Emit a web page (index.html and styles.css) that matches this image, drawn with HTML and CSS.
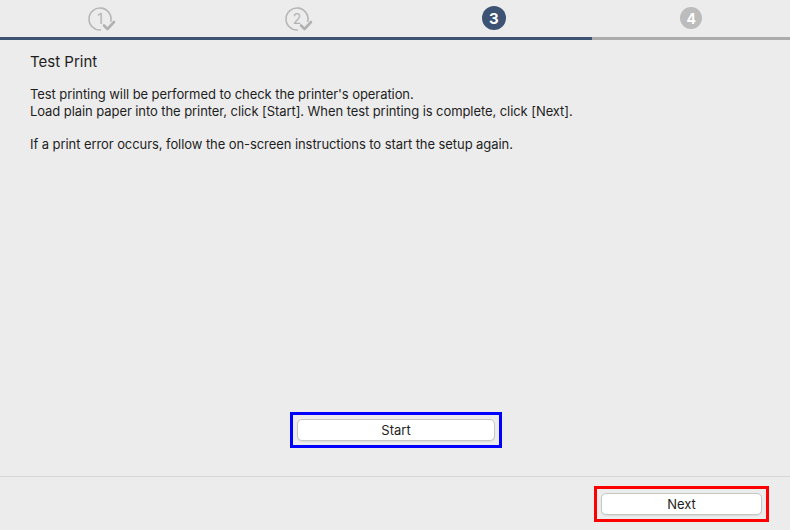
FILE: index.html
```html
<!DOCTYPE html>
<html>
<head>
<meta charset="utf-8">
<link rel="stylesheet" href="styles.css">
</head>
<body>
<div class="app">
  <div class="steps">
    <div class="step">
      <svg class="ico" width="30" height="30" viewBox="0 0 30 30">
        <path d="M13.96 25.96 A11 11 0 1 1 23.63 17.85" fill="none" stroke="#b7b7b7" stroke-width="1.6"/>
        <text x="13" y="20" text-anchor="middle" class="num-done">1</text>
        <path d="M17 21.5 L20.5 25 L27 18" fill="none" stroke="#b2b2b2" stroke-width="2.6" stroke-linecap="round" stroke-linejoin="round"/>
      </svg>
    </div>
    <div class="step">
      <svg class="ico" width="30" height="30" viewBox="0 0 30 30">
        <path d="M13.96 25.96 A11 11 0 1 1 23.63 17.85" fill="none" stroke="#b7b7b7" stroke-width="1.6"/>
        <text x="13" y="20" text-anchor="middle" class="num-done">2</text>
        <path d="M17 21.5 L20.5 25 L27 18" fill="none" stroke="#b2b2b2" stroke-width="2.6" stroke-linecap="round" stroke-linejoin="round"/>
      </svg>
    </div>
    <div class="step">
      <span class="badge current">3</span>
    </div>
    <div class="step">
      <span class="badge todo">4</span>
    </div>
  </div>
  <div class="progress"><div class="progress-fill"></div></div>
  <div class="content">
    <h1 class="title">Test Print</h1>
    <p class="text">Test printing will be performed to check the printer's operation.<br>Load plain paper into the printer, click [Start]. When test printing is complete, click [Next].</p>
    <p class="text">If a print error occurs, follow the on-screen instructions to start the setup again.</p>
    <div class="spacer"></div>
    <div class="start-row">
      <div class="mark mark-blue"><button class="btn btn-start">Start</button></div>
    </div>
  </div>
  <div class="footer">
    <div class="mark mark-red"><button class="btn btn-next">Next</button></div>
  </div>
</div>
</body>
</html>
```
FILE: styles.css
```css
html, body {
  margin: 0;
  padding: 0;
  background: #ececec;
}
body {
  font-family: Inter, "Liberation Sans", Arial, sans-serif;
  color: #1e1e1e;
}
.app {
  width: 790px;
  height: 530px;
  display: flex;
  flex-direction: column;
}
.steps {
  height: 37px;
  display: flex;
}
.step {
  flex: 1;
  display: flex;
  justify-content: center;
  align-items: center;
}
.ico {
  display: block;
  margin-left: 6px;
  margin-top: 1px;
}
.num-done {
  font-family: Inter, "Liberation Sans", sans-serif;
  font-size: 14px;
  fill: #b3b3b3;
}
.badge {
  width: 24px;
  height: 24px;
  border-radius: 50%;
  display: flex;
  align-items: center;
  justify-content: center;
  color: #fff;
  font-weight: 700;
  font-size: 15px;
  margin-top: -1px;
}
.badge.current { background: #3c5374; }
.badge.todo { background: #bcbcbc; width: 22px; height: 22px; font-size: 14px; }
.progress {
  height: 3px;
  background: #acacac;
}
.progress-fill {
  width: 592px;
  height: 3px;
  background: #3c5374;
}
.content {
  flex: 1;
  display: flex;
  flex-direction: column;
  padding: 13px 30px 0 30px;
}
.title {
  margin: 0;
  font-size: 15px;
  line-height: 18px;
  font-weight: 400;
}
.text {
  margin: 15px 0 0 0;
  font-size: 13px;
  line-height: 17px;
  letter-spacing: -0.075px;
}
.text + .text { margin-top: 16px; }
.spacer { flex: 1; }
.start-row {
  display: flex;
  justify-content: center;
  margin-bottom: 28px;
  margin-left: -30px;
  margin-right: -30px;
  padding-left: 2px;
}
.mark {
  padding: 4px;
  display: flex;
}
.mark-blue { border: 3px solid #0000ff; }
.mark-red { border: 3px solid #ff0000; }
.btn {
  font-family: inherit;
  font-size: 13px;
  color: #1e1e1e;
  background: #ffffff;
  border: 1px solid #c6c6c6;
  border-radius: 5px;
  box-shadow: 0 1px 1px rgba(0,0,0,0.08);
  padding: 0;
  height: 22px;
}
.btn-start { width: 198px; }
.btn-next { width: 161px; }
.footer {
  height: 52px;
  border-top: 1px solid #d6d6d6;
  display: flex;
  justify-content: flex-end;
  align-items: center;
  padding-right: 21px;
  padding-top: 1px;
}
```
